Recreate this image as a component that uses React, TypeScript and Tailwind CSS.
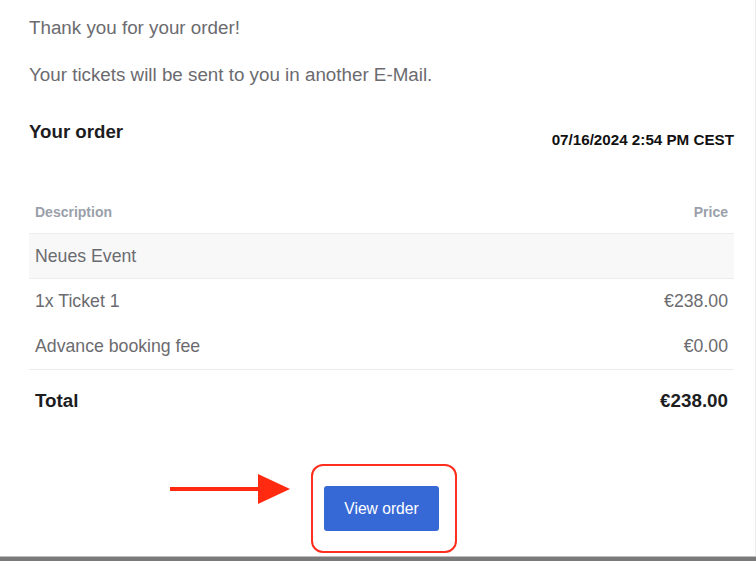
export default function App() {
  const rows = [
    { label: "1x Ticket 1", price: "€238.00" },
    { label: "Advance booking fee", price: "€0.00" },
  ];

  return (
    <div
      className="h-[561px] w-[756px] flex flex-col bg-white overflow-hidden"
      style={{ fontFamily: '"Liberation Sans", Arial, sans-serif' }}
    >
      <div className="flex-1 border-r border-[#ededed] pl-[29px] pr-[21px] pt-[16px]">
        {/* Intro */}
        <p className="text-[18.8px] leading-[24px] text-[#6b6b6f]">Thank you for your order!</p>
        <p className="mt-[23px] text-[18.8px] leading-[24px] text-[#6b6b6f]">
          Your tickets will be sent to you in another E-Mail.
        </p>

        {/* Order heading */}
        <div className="mt-[33px] flex items-start justify-between">
          <h2 className="text-[18.7px] leading-[24px] font-bold text-[#1d1d1f]">Your order</h2>
          <span className="mt-[10px] text-[15.2px] leading-[20px] font-bold text-[#111]">
            07/16/2024 2:54 PM CEST
          </span>
        </div>

        {/* Table */}
        <div className="mt-[42px]">
          <div className="flex h-[41px] items-center justify-between px-[6px] text-[14px] font-bold text-[#9aa0aa]">
            <span>Description</span>
            <span>Price</span>
          </div>
          <div className="flex h-[46px] items-center border-y border-[#ececec] bg-[#f8f8f8] px-[6px] text-[17.7px] text-[#6b6b6f]">
            Neues Event
          </div>
          {rows.map((r) => (
            <div
              key={r.label}
              className="flex h-[45px] items-center justify-between px-[6px] text-[17.7px] text-[#6b6b6f]"
            >
              <span>{r.label}</span>
              <span>{r.price}</span>
            </div>
          ))}
          <div className="flex h-[64px] items-center justify-between border-t border-[#ececec] px-[6px] text-[18.8px] font-bold text-[#1d1d1f]">
            <span>Total</span>
            <span>€238.00</span>
          </div>
        </div>

        {/* Call to action with annotation */}
        <div className="mt-[31px] flex items-start pl-[139px]">
          <svg width="124" height="32" viewBox="0 0 124 32" className="mt-[9px] mr-[19px]">
            <rect x="2" y="14" width="92" height="4" fill="#ff2a10" />
            <polygon points="90,1 122,16 90,31" fill="#ff2a10" />
          </svg>
          <div className="rounded-[12px] border-2 border-[#ff2f1f] pl-[11px] pr-[16px] pt-[20px] pb-[20px]">
            <button className="h-[45px] w-[115px] rounded-[3px] bg-[#3769d6] text-[15.6px] text-white">
              View order
            </button>
          </div>
        </div>
      </div>
      <div className="h-[5px] border-t border-[#bdbdbd] bg-[#7a7a7a]" />
    </div>
  );
}
